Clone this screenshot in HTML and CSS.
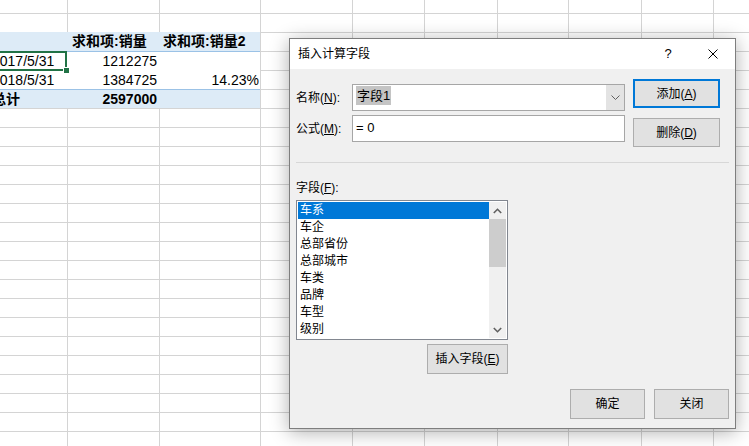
FILE: index.html
```html
<!DOCTYPE html>
<html lang="zh-CN">
<head>
    <meta charset="UTF-8">
    <meta name="viewport" content="width=device-width, initial-scale=1.0">
    <title>插入计算字段</title>
    <link rel="stylesheet" href="styles.css">
</head>
<body>
    <div class="sheet">
        <!-- 数据透视表 -->
        <div class="pivot">
            <div class="prow head">
                <div class="pc col-a"></div>
                <div class="pc col-b">求和项:销量</div>
                <div class="pc col-c">求和项:销量2</div>
            </div>
            <div class="prow row2">
                <div class="pc col-a active">2017/5/31</div>
                <div class="pc col-b num">1212275</div>
                <div class="pc col-c num"></div>
            </div>
            <div class="prow row3">
                <div class="pc col-a">2018/5/31</div>
                <div class="pc col-b num">1384725</div>
                <div class="pc col-c num">14.23%</div>
            </div>
            <div class="prow total">
                <div class="pc col-a">总计</div>
                <div class="pc col-b num">2597000</div>
                <div class="pc col-c"></div>
            </div>
        </div>

        <!-- 插入计算字段 对话框 -->
        <div class="dialog">
            <div class="titlebar">
                <span class="title">插入计算字段</span>
                <span class="help">?</span>
                <span class="close">
                    <svg width="10" height="10" viewBox="0 0 10 10"><path d="M0.5 0.5 L9.5 9.5 M9.5 0.5 L0.5 9.5" stroke="#000" stroke-width="1" fill="none"/></svg>
                </span>
            </div>
            <div class="dlg-body">
                <div class="top">
                    <div class="fields">
                        <div class="frow">
                            <label>名称(<u>N</u>):</label>
                            <div class="combo">
                                <span class="combo-text"><span class="sel">字段1</span></span>
                                <span class="drop">
                                    <svg width="9" height="5" viewBox="0 0 9 5"><path d="M0.5 0.5 L4.5 4.5 L8.5 0.5" stroke="#606060" stroke-width="1" fill="none"/></svg>
                                </span>
                            </div>
                        </div>
                        <div class="frow">
                            <label>公式(<u>M</u>):</label>
                            <div class="textbox">= 0</div>
                        </div>
                    </div>
                    <div class="side">
                        <button class="btn side-btn default">添加(<u>A</u>)</button>
                        <button class="btn side-btn">删除(<u>D</u>)</button>
                    </div>
                </div>

                <div class="sep"></div>

                <div class="list-label">字段(<u>F</u>):</div>
                <div class="list-wrap">
                    <div class="listbox">
                        <ul class="items">
                            <li class="selected">车系</li>
                            <li>车企</li>
                            <li>总部省份</li>
                            <li>总部城市</li>
                            <li>车类</li>
                            <li>品牌</li>
                            <li>车型</li>
                            <li>级别</li>
                        </ul>
                        <div class="scroll">
                            <div class="arrow">
                                <svg width="9" height="6" viewBox="0 0 9 6"><path d="M0.8 5 L4.5 1.3 L8.2 5" stroke="#606060" stroke-width="1.6" fill="none"/></svg>
                            </div>
                            <div class="thumb"></div>
                            <div class="track"></div>
                            <div class="arrow">
                                <svg width="9" height="6" viewBox="0 0 9 6"><path d="M0.8 1 L4.5 4.7 L8.2 1" stroke="#606060" stroke-width="1.6" fill="none"/></svg>
                            </div>
                        </div>
                    </div>
                    <button class="btn insert">插入字段(<u>E</u>)</button>
                </div>

                <div class="footer">
                    <button class="btn foot-btn">确定</button>
                    <button class="btn foot-btn">关闭</button>
                </div>
            </div>
        </div>
    </div>
</body>
</html>
```

FILE: styles.css
```css
body {
    margin: 0;
    background: #fff;
}
.sheet {
    position: relative;
    width: 749px;
    height: 446px;
    overflow: hidden;
    box-sizing: border-box;
    padding-top: 32px;
    background-color: #fff;
    background-image:
        linear-gradient(#d4d4d4, #d4d4d4),
        linear-gradient(#d4d4d4, #d4d4d4),
        linear-gradient(#d4d4d4, #d4d4d4),
        linear-gradient(#d4d4d4, #d4d4d4),
        linear-gradient(#d4d4d4, #d4d4d4),
        linear-gradient(#d4d4d4, #d4d4d4),
        linear-gradient(#d4d4d4, #d4d4d4),
        linear-gradient(#d4d4d4, #d4d4d4),
        linear-gradient(#d4d4d4, #d4d4d4),
        linear-gradient(#d4d4d4 1px, transparent 1px);
    background-size: 1px 100%, 1px 100%, 1px 100%, 1px 100%, 1px 100%, 1px 100%, 1px 100%, 1px 100%, 1px 100%, 100% 19px;
    background-position: 67px 0, 159px 0, 260px 0, 352px 0, 424px 0, 497px 0, 568px 0, 641px 0, 713px 0, 0 13px;
    background-repeat: no-repeat, no-repeat, no-repeat, no-repeat, no-repeat, no-repeat, no-repeat, no-repeat, no-repeat, repeat-y;
    font-family: "Liberation Sans", "Noto Sans CJK SC", sans-serif;
}

/* 透视表 */
.pivot {
    width: 270px;
    margin-left: -10px;
    font-size: 14px;
    color: #000;
}
.prow {
    display: flex;
    background: #fff;
}
.prow.head {
    height: 19px;
    background: #ddebf7;
    border-bottom: 1px solid #9bc2e6;
    font-weight: bold;
}
.prow.row2 {
    height: 19px;
}
.prow.row3 {
    height: 18px;
    border-bottom: 1px solid #9bc2e6;
}
.prow.total {
    height: 18px;
    background: #ddebf7;
    font-weight: bold;
}
.pc {
    box-sizing: border-box;
    white-space: nowrap;
    overflow: hidden;
    line-height: inherit;
}
.prow.head .pc, .prow.row2 .pc { line-height: 19px; }
.prow.row3 .pc, .prow.total .pc { line-height: 18px; }
.col-a {
    width: 78px;
    padding-left: 2px;
}
.col-b {
    width: 92px;
    padding-left: 4px;
    padding-right: 3px;
}
.col-c {
    width: 100px;
    padding-left: 3px;
    padding-right: 1px;
}
.num {
    text-align: right;
}
.pc.active {
    position: relative;
    overflow: visible;
}
.pc.active::before {
    content: "";
    position: absolute;
    top: -1px;
    left: 0;
    right: 1px;
    bottom: 0;
    border: 2px solid #217346;
}
.pc.active::after {
    content: "";
    position: absolute;
    right: -2px;
    bottom: -3px;
    width: 5px;
    height: 5px;
    background: #217346;
    border: 1px solid #fff;
}

/* 对话框 */
.dialog {
    position: absolute;
    left: 289px;
    top: 38px;
    width: 447px;
    height: 391px;
    box-sizing: border-box;
    border: 1px solid #7e7e7e;
    background: #f0f0f0;
    box-shadow: 0 3px 18px rgba(0, 0, 0, 0.32);
    display: flex;
    flex-direction: column;
    font-size: 12px;
    color: #000;
}
.titlebar {
    height: 30px;
    background: #fff;
    display: flex;
    align-items: center;
    padding-left: 8px;
    padding-right: 17px;
}
.title {
    flex: 1;
    line-height: 16px;
}
.help {
    width: 12px;
    text-align: center;
    font-size: 13px;
    line-height: 16px;
    margin-right: 34px;
}
.close {
    display: flex;
    width: 10px;
    height: 10px;
}
.dlg-body {
    flex: 1;
    display: flex;
    flex-direction: column;
    padding: 10px 6px 9px 6px;
}
.top {
    display: flex;
    gap: 8px;
    align-items: flex-start;
}
.fields {
    padding-top: 5px;
    display: flex;
    flex-direction: column;
    gap: 4px;
}
.frow {
    display: flex;
    align-items: center;
}
.frow label {
    width: 56px;
    line-height: 16px;
}
.combo, .textbox {
    width: 273px;
    height: 27px;
    box-sizing: border-box;
    border: 1px solid #a6a6a6;
    background: #fff;
}
.combo {
    display: flex;
}
.combo-text {
    flex: 1;
    padding: 1px 0 0 3px;
}
.sel {
    display: inline-block;
    background: #c4c4c4;
    line-height: 19px;
    padding: 0 1px;
    font-size: 13px;
}
.drop {
    width: 18px;
    background: #e3e3e3;
    display: flex;
    align-items: center;
    justify-content: center;
}
.textbox {
    padding-left: 3px;
    line-height: 24px;
    font-size: 13px;
}
.side {
    display: flex;
    flex-direction: column;
    gap: 10px;
}
.btn {
    box-sizing: border-box;
    border: 1px solid #adadad;
    background: #e1e1e1;
    font-family: "Liberation Sans", "Noto Sans CJK SC", sans-serif;
    font-size: 12px;
    color: #000;
    padding: 0;
    line-height: 16px;
}
.btn u {
    text-underline-offset: 1px;
}
.side-btn {
    width: 87px;
    height: 29px;
}
.side-btn.default {
    border: 2px solid #0078d7;
}
.sep {
    height: 1px;
    background: #d7d7d7;
    margin-top: 15px;
}
.list-label {
    margin-top: 17px;
    line-height: 16px;
}
.list-wrap {
    width: 212px;
    margin-top: 4px;
    display: flex;
    flex-direction: column;
}
.listbox {
    height: 140px;
    box-sizing: border-box;
    border: 1px solid #828790;
    background: #fff;
    padding: 1px;
    display: flex;
}
.items {
    list-style: none;
    margin: 0;
    padding: 0;
    flex: 1;
}
.items li {
    height: 17px;
    line-height: 17px;
    padding-left: 2px;
}
.items li.selected {
    background: #0078d7;
    color: #fff;
}
.scroll {
    width: 17px;
    background: #f0f0f0;
    display: flex;
    flex-direction: column;
}
.arrow {
    height: 17px;
    display: flex;
    align-items: center;
    justify-content: center;
}
.thumb {
    height: 48px;
    background: #cdcdcd;
}
.track {
    flex: 1;
}
.insert {
    align-self: flex-end;
    width: 81px;
    height: 30px;
    margin-top: 4px;
}
.footer {
    margin-top: auto;
    display: flex;
    justify-content: flex-end;
    gap: 9px;
}
.foot-btn {
    width: 75px;
    height: 30px;
}
```
